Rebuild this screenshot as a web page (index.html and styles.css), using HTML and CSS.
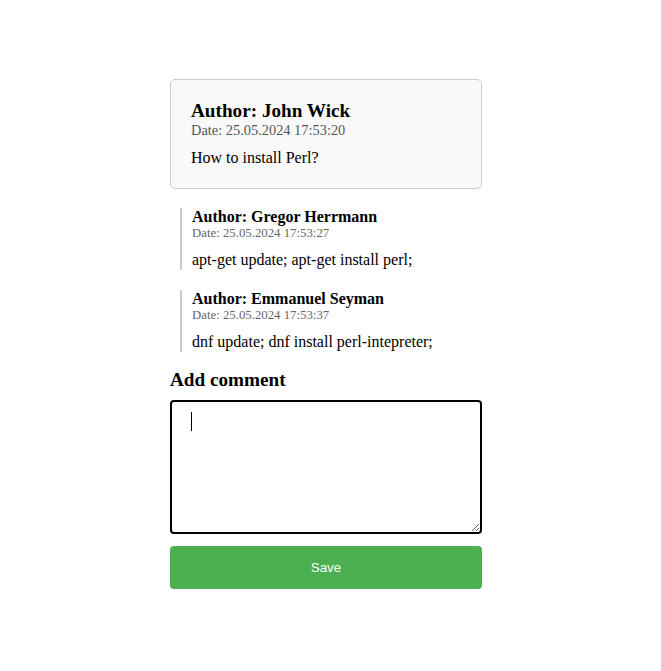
FILE: index.html
```html
<!DOCTYPE html>
<html>
<head>
<meta charset="utf-8">
<link rel="stylesheet" href="styles.css">
</head>
<body>
<div class="page">
  <div class="post">
    <div class="post-author">Author: John Wick</div>
    <div class="post-date">Date: 25.05.2024 17:53:20</div>
    <div class="post-text">How to install Perl?</div>
  </div>
  <div class="comments">
    <div class="comment">
      <div class="comment-author">Author: Gregor Herrmann</div>
      <div class="comment-date">Date: 25.05.2024 17:53:27</div>
      <div class="comment-text">apt-get update; apt-get install perl;</div>
    </div>
    <div class="comment">
      <div class="comment-author">Author: Emmanuel Seyman</div>
      <div class="comment-date">Date: 25.05.2024 17:53:37</div>
      <div class="comment-text">dnf update; dnf install perl-intepreter;</div>
    </div>
  </div>
  <div class="add-title">Add comment</div>
  <div class="input-wrap">
    <textarea class="input"></textarea>
    <span class="caret"></span>
  </div>
  <button class="save">Save</button>
</div>
</body>
</html>
```
FILE: styles.css
```css
html, body {
  margin: 0;
  padding: 0;
  background: #fff;
}
body {
  font-family: "Liberation Serif", "Times New Roman", serif;
  font-size: 16px;
  color: #000;
}
.page {
  width: 312px;
  margin: 79px 0 0 170px;
  display: flex;
  flex-direction: column;
}
.post {
  background: #f9f9f9;
  border: 1px solid #ccc;
  border-radius: 5px;
  padding: 20px 20px 21px;
}
.post-author {
  font-weight: bold;
  font-size: 19.2px;
  line-height: 22px;
}
.post-date {
  color: #555;
  font-size: 14.4px;
  line-height: 16.5px;
}
.post-text {
  margin-top: 10px;
  line-height: 18.4px;
}
.comments {
  display: flex;
  flex-direction: column;
  gap: 20px;
  margin-top: 19px;
}
.comment {
  margin-left: 10px;
  border-left: 2px solid #ccc;
  padding-left: 10px;
}
.comment-author {
  font-weight: bold;
  font-size: 16px;
  line-height: 18.4px;
}
.comment-date {
  color: #666;
  font-size: 12.8px;
  line-height: 15px;
}
.comment-text {
  margin-top: 10px;
  line-height: 18.6px;
}
.add-title {
  margin-top: 17px;
  font-weight: bold;
  font-size: 19.2px;
  line-height: 22px;
}
.input-wrap {
  position: relative;
  margin-top: 9px;
  display: flex;
}
.input {
  box-sizing: border-box;
  width: 312px;
  height: 134px;
  margin: 0;
  border: 2px solid #000;
  border-radius: 4px;
  padding: 12px 19px;
  font-family: "Liberation Serif", serif;
  font-size: 16px;
  outline: none;
  background: #fff;
}
.caret {
  position: absolute;
  left: 21px;
  top: 12px;
  width: 1px;
  height: 19px;
  background: #000;
}
.save {
  margin-top: 12px;
  height: 43px;
  border: none;
  border-radius: 4px;
  background: #4caf50;
  color: #fff;
  font-family: "Liberation Sans", Arial, sans-serif;
  font-size: 13.33px;
}
```
